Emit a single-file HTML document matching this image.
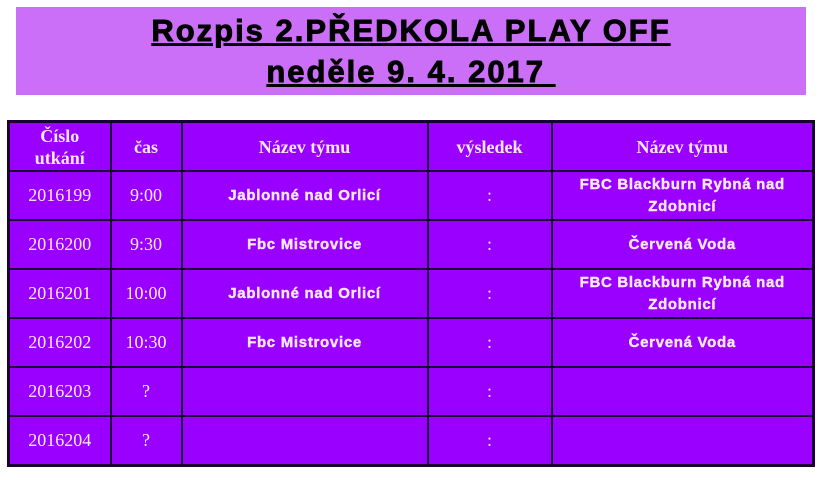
<!DOCTYPE html><html><head><meta charset="utf-8"><style>
body{margin:0;width:831px;height:481px;background:#fff;position:relative;overflow:hidden}
.ban{position:absolute;left:16px;top:7px;width:790px;height:88px;background:#cc6ff8;text-align:center;font:bold 31px "Liberation Sans",sans-serif;color:#000;letter-spacing:2px;-webkit-text-stroke:0.9px #000}
.ban div{text-decoration:underline;height:41px;line-height:48px}
table{position:absolute;left:7px;top:120px;border-collapse:collapse;background:#9900ff;border:3px solid #1a0033;table-layout:fixed;width:805px}
td{border:2px solid #1a0033;text-align:center;color:#ffe8ff;padding:0 8px;height:47px;font:18px "Liberation Serif",serif}
tr.h td{font-weight:bold;height:47px;line-height:22px}
.t{font:bold 15px "Liberation Sans",sans-serif;line-height:22px;letter-spacing:0.7px;-webkit-text-stroke:0.4px #ffe8ff}
</style></head><body>
<div class="ban"><div>Rozpis 2.PŘEDKOLA PLAY OFF</div><div>neděle 9. 4. 2017&nbsp;</div></div>
<table>
<colgroup><col style="width:102px"><col style="width:71px"><col style="width:246px"><col style="width:124px"><col style="width:262px"></colgroup>
<tr class="h"><td>Číslo<br>utkání</td><td>čas</td><td>Název týmu</td><td>výsledek</td><td>Název týmu</td></tr>
<tr><td>2016199</td><td>9:00</td><td class="t">Jablonné nad Orlicí</td><td>:</td><td class="t">FBC Blackburn Rybná nad Zdobnicí</td></tr>
<tr><td>2016200</td><td>9:30</td><td class="t">Fbc Mistrovice</td><td>:</td><td class="t">Červená Voda</td></tr>
<tr><td>2016201</td><td>10:00</td><td class="t">Jablonné nad Orlicí</td><td>:</td><td class="t">FBC Blackburn Rybná nad Zdobnicí</td></tr>
<tr><td>2016202</td><td>10:30</td><td class="t">Fbc Mistrovice</td><td>:</td><td class="t">Červená Voda</td></tr>
<tr><td>2016203</td><td>?</td><td></td><td>:</td><td></td></tr>
<tr><td>2016204</td><td>?</td><td></td><td>:</td><td></td></tr>
</table>
</body></html>
